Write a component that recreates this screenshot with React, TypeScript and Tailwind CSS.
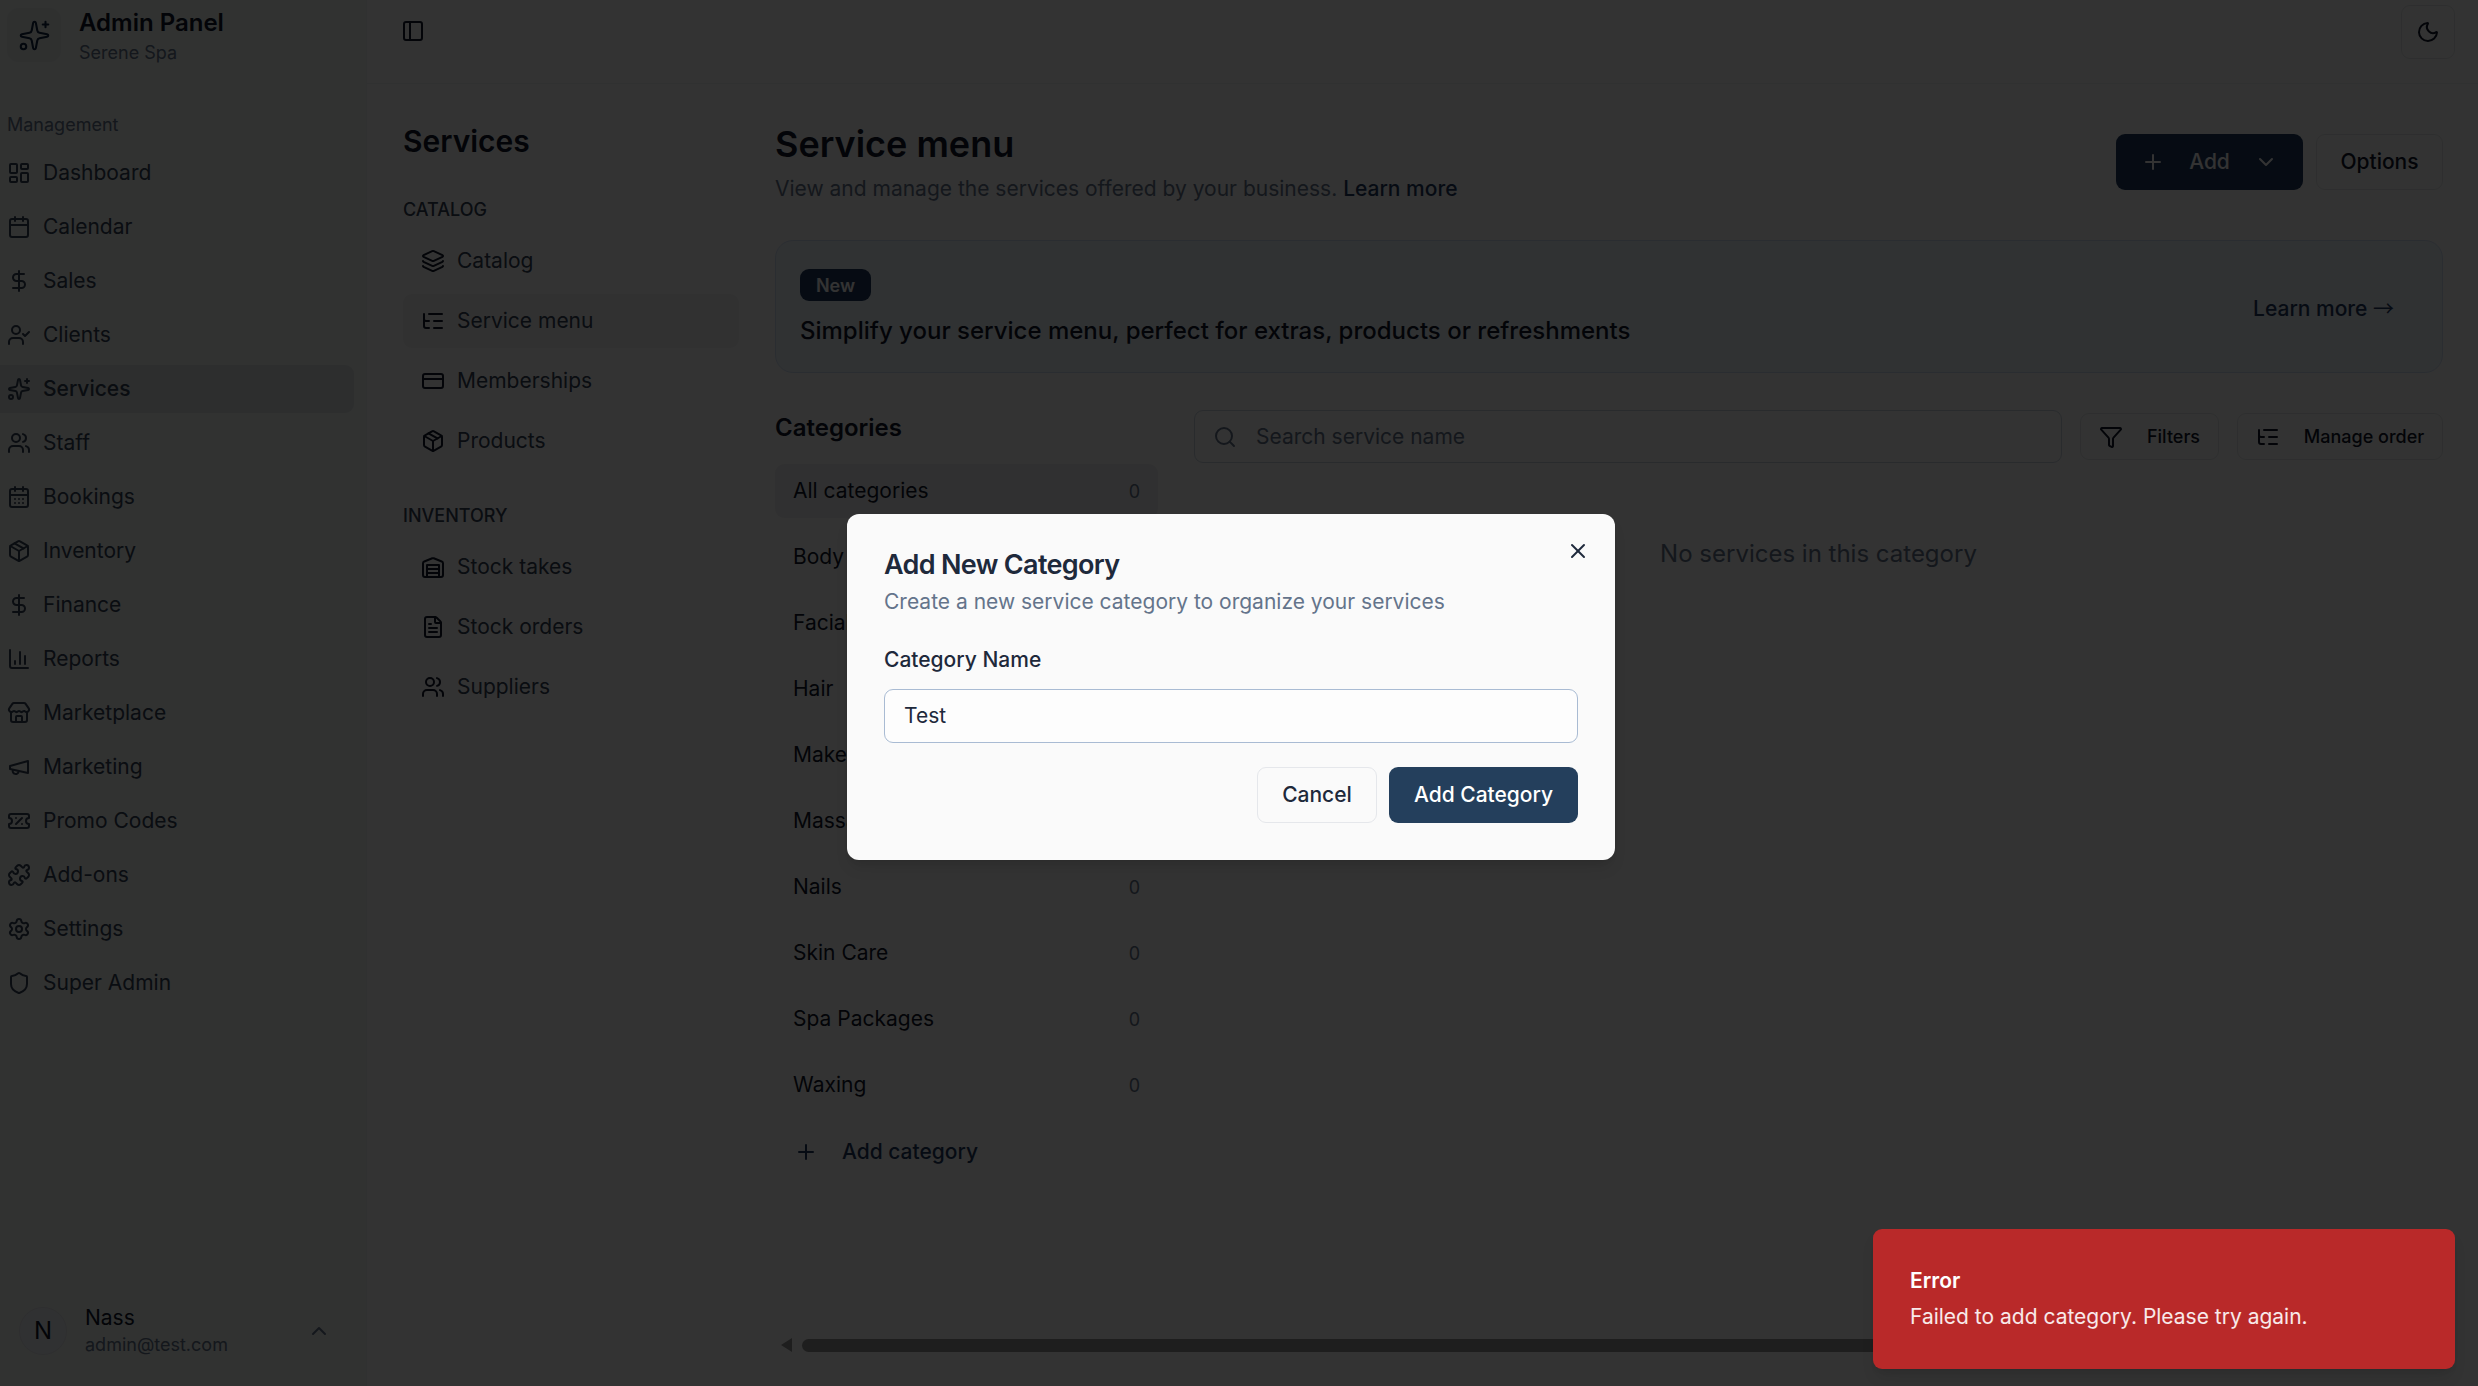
import {
  Calendar,
  CalendarDays,
  ChartColumn,
  ChevronDown,
  ChevronUp,
  CreditCard,
  DollarSign,
  FileText,
  Filter,
  Layers,
  LayoutDashboard,
  ListTree,
  Moon,
  Package,
  PanelLeft,
  Plus,
  Puzzle,
  Search,
  Settings,
  Shield,
  Sparkles,
  Store,
  TicketPercent,
  UserCheck,
  Users,
  X,
} from "lucide-react";

type IconProps = { size?: number; className?: string };

// older lucide shapes, the package's current ones look different
function MegaphoneIcon({ size = 24, className }: IconProps) {
  return (
    <svg width={size} height={size} viewBox="0 0 24 24" fill="none" stroke="currentColor" strokeWidth="2" strokeLinecap="round" strokeLinejoin="round" className={className}>
      <path d="m3 11 18-5v12L3 14v-3z" />
      <path d="M11.6 16.8a3 3 0 1 1-5.8-1.6" />
    </svg>
  );
}

function WarehouseIcon({ size = 24, className }: IconProps) {
  return (
    <svg width={size} height={size} viewBox="0 0 24 24" fill="none" stroke="currentColor" strokeWidth="2" strokeLinecap="round" strokeLinejoin="round" className={className}>
      <path d="M22 8.35V20a2 2 0 0 1-2 2H4a2 2 0 0 1-2-2V8.35A2 2 0 0 1 3.26 6.5l8-3.2a2 2 0 0 1 1.48 0l8 3.2A2 2 0 0 1 22 8.35Z" />
      <path d="M6 18h12" />
      <path d="M6 14h12" />
      <rect width="12" height="12" x="6" y="10" />
    </svg>
  );
}

const navItems = [
  { label: "Dashboard", icon: LayoutDashboard },
  { label: "Calendar", icon: Calendar },
  { label: "Sales", icon: DollarSign },
  { label: "Clients", icon: UserCheck },
  { label: "Services", icon: Sparkles, active: true },
  { label: "Staff", icon: Users },
  { label: "Bookings", icon: CalendarDays },
  { label: "Inventory", icon: Package },
  { label: "Finance", icon: DollarSign },
  { label: "Reports", icon: ChartColumn },
  { label: "Marketplace", icon: Store },
  { label: "Marketing", icon: MegaphoneIcon },
  { label: "Promo Codes", icon: TicketPercent },
  { label: "Add-ons", icon: Puzzle },
  { label: "Settings", icon: Settings },
  { label: "Super Admin", icon: Shield },
];

const catalogItems = [
  { label: "Catalog", icon: Layers },
  { label: "Service menu", icon: ListTree, active: true },
  { label: "Memberships", icon: CreditCard },
  { label: "Products", icon: Package },
];

const inventoryItems = [
  { label: "Stock takes", icon: WarehouseIcon },
  { label: "Stock orders", icon: FileText },
  { label: "Suppliers", icon: Users },
];

const categories = ["All categories", "Body", "Facial", "Hair", "Makeup", "Massage", "Nails", "Skin Care", "Spa Packages", "Waxing"];

function PanelLink({ item }: { item: { label: string; icon: React.ComponentType<IconProps>; active?: boolean } }) {
  const Icon = item.icon;
  return (
    <div className={`flex h-[54px] items-center gap-[12px] rounded-[9px] pl-[18px] text-[21px] text-[#334155] ${item.active ? "bg-[#f4f4f5]" : ""}`}>
      <Icon size={24} className="shrink-0 text-[#0f172a]" />
      {item.label}
    </div>
  );
}

export default function App() {
  return (
    <div className="relative flex h-[1386px] w-full overflow-hidden bg-white font-['Inter',sans-serif] text-[#0f172a]">
      {/* Main sidebar */}
      <aside className="flex w-[367px] shrink-0 flex-col border-r border-[#eef2f6] bg-[#f2f7f5]">
        <div className="flex h-[83px] items-start gap-[18px] pl-[7px] pt-[8px]">
          <div className="flex h-[54px] w-[54px] items-center justify-center rounded-[12px] bg-[#e8eeec]">
            <Sparkles size={33} strokeWidth={1.5} className="text-[#0f2440]" />
          </div>
          <div className="-mt-[3px]">
            <div className="text-[24px] font-semibold leading-[36px]">Admin Panel</div>
            <div className="text-[18px] leading-[24px] text-[#64748b]">Serene Spa</div>
          </div>
        </div>
        <div className="pl-[7px] pt-[28px] text-[18px] leading-[27px] text-[#64748b]">Management</div>
        <nav className="mt-[11px] flex w-[354px] flex-col gap-[6px]">
          {navItems.map((item) => {
            const Icon = item.icon;
            return (
              <div
                key={item.label}
                className={`flex h-[48px] items-center gap-[12px] rounded-r-[9px] pl-[7px] text-[21px] text-[#334155] ${item.active ? "bg-[#dfe6e4] font-medium" : ""}`}
              >
                <Icon size={24} className="shrink-0" />
                {item.label}
              </div>
            );
          })}
        </nav>
        <div className="mt-auto flex items-center gap-[18px] pb-[28px] pl-[19px]">
          <div className="flex h-[48px] w-[48px] items-center justify-center rounded-full border border-[#e5e7eb] bg-[#f1f5f9] text-[24px]">N</div>
          <div className="w-[207px]">
            <div className="text-[21px] leading-[27px]">Nass</div>
            <div className="text-[18px] leading-[27px] text-[#64748b]">admin@test.com</div>
          </div>
          <ChevronUp size={24} className="-ml-[3px] text-[#64748b]" />
        </div>
      </aside>

      <div className="flex min-w-0 flex-1 flex-col">
        {/* Top bar */}
        <header className="flex h-[84px] shrink-0 items-start justify-between border-b border-[#eef2f6] pl-[34px] pr-[23px] pt-[5px]">
          <PanelLeft size={24} className="mt-[14px]" />
          <div className="flex h-[54px] w-[54px] items-center justify-center rounded-[9px] border border-[#e5e7eb]">
            <Moon size={24} />
          </div>
        </header>

        <div className="flex min-h-0 flex-1">
          {/* Secondary panel */}
          <div className="w-[408px] shrink-0 pl-[36px] pr-[36px] pt-[39px]">
            <h2 className="text-[30px] font-semibold leading-[36px]">Services</h2>
            <div className="mt-[37px] text-[18px] font-medium uppercase leading-[27px] text-[#334155]">Catalog</div>
            <div className="mt-[11px] flex flex-col gap-[6px]">
              {catalogItems.map((item) => (
                <PanelLink key={item.label} item={item} />
              ))}
            </div>
            <div className="mt-[34px] text-[18px] font-medium uppercase leading-[27px] text-[#334155]">Inventory</div>
            <div className="mt-[11px] flex flex-col gap-[6px]">
              {inventoryItems.map((item) => (
                <PanelLink key={item.label} item={item} />
              ))}
            </div>
          </div>

          {/* Page content */}
          <main className="flex min-w-0 flex-1 flex-col pb-[34px] pr-[35px] pt-[33px]">
            <div className="flex items-start justify-between">
              <div>
                <h1 className="text-[36px] font-semibold leading-[54px]">Service menu</h1>
                <p className="mt-[2px] text-[21px] leading-[32px] text-[#64748b]">
                  View and manage the services offered by your business. <span className="font-medium text-[#1e3a5f]">Learn more</span>
                </p>
              </div>
              <div className="mt-[17px] flex gap-[13px]">
                <div className="flex h-[56px] w-[187px] items-center justify-center gap-[24px] rounded-[9px] bg-[#1e3a5f] text-[21px] font-medium text-white">
                  <Plus size={24} />
                  Add
                  <ChevronDown size={24} />
                </div>
                <div className="flex h-[56px] w-[127px] items-center justify-center rounded-[9px] border border-[#e5e7eb] text-[21px] font-medium">Options</div>
              </div>
            </div>

            <div className="mt-[35px] flex h-[133px] items-start justify-between rounded-[18px] border border-[#d3e2f5] bg-[#f0f7ff] pl-[24px] pr-[48px] pt-[28px]">
              <div>
                <span className="flex h-[32px] w-[71px] items-center justify-center rounded-[9px] bg-[#1e3a5f] text-[18px] font-semibold text-white">New</span>
                <div className="mt-[12px] text-[24px] font-medium leading-[36px]">Simplify your service menu, perfect for extras, products or refreshments</div>
              </div>
              <div className="mt-[22px] text-[21px] font-medium leading-[32px] text-[#1e3a5f]">
                Learn more <span className="font-['Noto_Sans_CJK_SC',sans-serif] font-normal">→</span>
              </div>
            </div>

            <div className="mt-[37px] flex gap-[36px]">
              <div className="w-[383px] shrink-0">
                <h3 className="text-[24px] font-semibold leading-[36px]">Categories</h3>
                <div className="mt-[18px] flex flex-col gap-[12px]">
                  {categories.map((name, i) => (
                    <div
                      key={name}
                      className={`flex h-[54px] items-center justify-between rounded-[9px] pl-[18px] pr-[18px] text-[21px] ${i === 0 ? "bg-[#f1f1f2]" : ""}`}
                    >
                      {name}
                      <span className="text-[18px] text-[#64748b]">0</span>
                    </div>
                  ))}
                  <div className="mt-[1px] flex h-[54px] items-center gap-[24px] pl-[19px] text-[21px] font-medium text-[#1e3a5f]">
                    <Plus size={24} />
                    Add category
                  </div>
                </div>
              </div>

              <div className="min-w-0 flex-1">
                <div className="flex h-[53px] items-center gap-[18px]">
                  <div className="flex h-[53px] flex-1 items-center gap-[19px] rounded-[9px] border border-[#cbd5e1] pl-[18px] text-[21px] text-[#64748b]">
                    <Search size={24} />
                    Search service name
                  </div>
                  <div className="flex h-[47px] w-[139px] items-center justify-center gap-[24px] rounded-[9px] border border-[#e5e7eb] text-[18px] font-medium">
                    <Filter size={24} />
                    Filters
                  </div>
                  <div className="flex h-[47px] w-[206px] items-center justify-center gap-[24px] rounded-[9px] border border-[#e5e7eb] text-[18px] font-medium">
                    <ListTree size={24} />
                    Manage order
                  </div>
                </div>
                <div className="mt-[73px] text-center text-[24px] text-[#64748b]">No services in this category</div>
              </div>
            </div>

            <div className="mt-auto flex h-[14px] items-center gap-[10px] pl-[6px]">
              <div className="h-0 w-0 border-y-[7px] border-r-[11px] border-y-transparent border-r-[#969696]" />
              <div className="h-[13px] flex-1 rounded-full bg-[#969696]" />
            </div>
          </main>
        </div>
      </div>

      {/* Modal backdrop */}
      <div className="absolute inset-0 bg-black/80" />

      {/* Dialog */}
      <div className="absolute left-[847px] top-[514px] h-[346px] w-[768px] rounded-[12px] bg-[#fafafa] px-[37px] pt-[33px] shadow-lg">
        <X size={24} className="absolute right-[25px] top-[25px] text-[#1e293b]" />
        <h2 className="text-[27px] font-semibold leading-[36px] tracking-tight text-[#1e293b]">Add New Category</h2>
        <p className="mt-[3px] text-[21px] leading-[32px] text-[#64748b]">Create a new service category to organize your services</p>
        <label className="mt-[26px] block text-[21px] font-medium leading-[32px] text-[#1e293b]">Category Name</label>
        <div className="mt-[13px] flex h-[54px] items-center rounded-[9px] border border-[#a9bbd3] bg-white/60 pl-[19px] text-[21px] text-[#1e293b]">Test</div>
        <div className="mt-[24px] flex justify-end gap-[12px]">
          <div className="flex h-[56px] w-[120px] items-center justify-center rounded-[9px] border border-[#e5e7eb] text-[21px] font-medium text-[#1e293b]">Cancel</div>
          <div className="flex h-[56px] w-[189px] items-center justify-center rounded-[9px] bg-[#243f5c] text-[21px] font-medium text-white">Add Category</div>
        </div>
      </div>

      {/* Toast */}
      <div className="absolute bottom-[17px] right-[23px] h-[140px] w-[582px] rounded-[9px] bg-[#b92929] pl-[37px] pt-[36px] shadow-lg">
        <div className="text-[21px] font-semibold leading-[32px] text-white">Error</div>
        <div className="mt-[4px] text-[21px] leading-[32px] text-white/90">Failed to add category. Please try again.</div>
      </div>
    </div>
  );
}
